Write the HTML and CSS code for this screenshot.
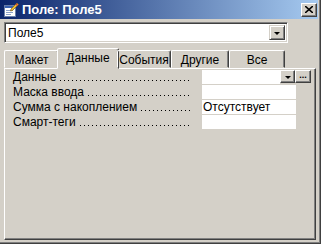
FILE: index.html
```html
<!DOCTYPE html>
<html lang="ru">
<head>
    <meta charset="UTF-8">
    <title>Поле: Поле5</title>
    <link rel="stylesheet" href="styles.css">
</head>
<body>
    <div class="window">
        <div class="titlebar">
            <svg class="app-icon" width="16" height="16" viewBox="0 0 16 16">
                <rect x="1.5" y="3.5" width="11" height="11" fill="#fff" stroke="#6a7fa8"/>
                <rect x="2" y="4" width="10" height="2" fill="#3a62b0"/>
                <line x1="3" y1="8.5" x2="10" y2="8.5" stroke="#8aa0c8"/>
                <line x1="3" y1="10.5" x2="10" y2="10.5" stroke="#8aa0c8"/>
                <line x1="3" y1="12.5" x2="8" y2="12.5" stroke="#8aa0c8"/>
                <path d="M8 7 L14 1 L15.5 2.5 L9.5 8.5 L7.5 9 Z" fill="#f0c030" stroke="#806020" stroke-width="0.7"/>
                <path d="M13 2 L14.5 3.5" stroke="#d04040" stroke-width="1.2"/>
            </svg>
            <span class="title">Поле: Поле5</span>
            <span class="close-btn">
                <svg width="8" height="7" viewBox="0 0 8 7">
                    <path d="M0 0 L8 7 M8 0 L0 7" stroke="#000" stroke-width="1.6"/>
                </svg>
            </span>
        </div>

        <div class="content">
            <div class="combo">
                <span class="combo-text">Поле5</span>
                <span class="drop-btn"><span class="arrow"></span></span>
            </div>

            <div class="tabs">
                <div class="tab tab-maket">Макет</div>
                <div class="tab tab-data active">Данные</div>
                <div class="tab tab-events">События</div>
                <div class="tab tab-other">Другие</div>
                <div class="tab tab-all">Все</div>
            </div>

            <div class="page">
                <div class="prop">
                    <span class="label">Данные</span>
                    <span class="dots"></span>
                    <span class="value value-combo">
                        <span class="value-box"></span>
                        <span class="small-btn"><span class="arrow"></span></span>
                        <span class="small-btn build">...</span>
                    </span>
                </div>
                <div class="prop">
                    <span class="label">Маска ввода</span>
                    <span class="dots"></span>
                    <span class="value"></span>
                </div>
                <div class="prop">
                    <span class="label">Сумма с накоплением</span>
                    <span class="dots"></span>
                    <span class="value">Отсутствует</span>
                </div>
                <div class="prop">
                    <span class="label">Смарт-теги</span>
                    <span class="dots"></span>
                    <span class="value"></span>
                </div>
            </div>
        </div>
    </div>
</body>
</html>
```

FILE: styles.css
```css
body {
    margin: 0;
    font-family: 'Liberation Sans', Arial, sans-serif;
    font-size: 12px;
    color: #000;
    background-color: #d4d0c8;
}

.window {
    width: 321px;
    height: 244px;
    box-sizing: border-box;
    background-color: #d4d0c8;
    border-right: 1px solid #404040;
    border-bottom: 1px solid #404040;
    box-shadow: inset -1px -1px 0 #808080;
    overflow: hidden;
}

/* заголовок окна */
.titlebar {
    height: 19px;
    margin-right: 2px;
    display: flex;
    align-items: center;
    padding-left: 3px;
    background: linear-gradient(to right, #0a246a, #a6caf0);
}

.app-icon {
    flex: none;
}

.title {
    margin-left: 3px;
    color: #fff;
    font-weight: bold;
    font-size: 13px;
    flex: 1;
}

.close-btn {
    width: 16px;
    height: 14px;
    margin-right: 1px;
    box-sizing: border-box;
    background-color: #d4d0c8;
    border: 1px solid;
    border-color: #fff #404040 #404040 #fff;
    box-shadow: inset -1px -1px 0 #808080;
    display: flex;
    align-items: center;
    justify-content: center;
}

.content {
    padding: 3px 4px 0 4px;
}

/* поле со списком */
.combo {
    width: 284px;
    height: 21px;
    box-sizing: border-box;
    background-color: #fff;
    border: 1px solid;
    border-color: #808080 #fff #fff #808080;
    box-shadow: inset 1px 1px 0 #404040, inset -1px -1px 0 #d4d0c8;
    display: flex;
    align-items: center;
    padding: 2px;
}

.combo-text {
    flex: 1;
    padding-left: 1px;
}

.drop-btn {
    width: 16px;
    height: 15px;
    box-sizing: border-box;
    background-color: #d4d0c8;
    border: 1px solid;
    border-color: #d4d0c8 #404040 #404040 #d4d0c8;
    box-shadow: inset 1px 1px 0 #fff, inset -1px -1px 0 #808080;
    display: flex;
    align-items: center;
    justify-content: center;
}

.arrow {
    width: 0;
    height: 0;
    border-left: 3px solid transparent;
    border-right: 3px solid transparent;
    border-top: 3px solid #000;
    margin-top: 1px;
}

/* вкладки */
.tabs {
    margin-top: 5px;
    height: 20px;
    display: flex;
    align-items: flex-end;
    position: relative;
    z-index: 1;
}

.tab {
    height: 18px;
    box-sizing: border-box;
    border: 1px solid;
    border-color: #fff #404040 transparent #fff;
    box-shadow: inset -1px 0 0 #808080;
    border-radius: 2px 2px 0 0;
    display: flex;
    align-items: center;
    justify-content: center;
    padding-top: 2px;
}

.tab-maket { width: 55px; }
.tab-data { width: 61px; }
.tab-events { width: 54px; }
.tab-other { width: 58px; }
.tab-all { width: 56px; }

.tab.active {
    height: 21px;
    margin: 0 -2px -1px -2px;
    background-color: #d4d0c8;
    padding-top: 0;
    padding-bottom: 2px;
}

.tab-data.active {
    width: 62px;
}

/* страница свойств */
.page {
    height: 172px;
    box-sizing: border-box;
    border: 1px solid;
    border-color: #fff #404040 #404040 #fff;
    box-shadow: inset -1px -1px 0 #808080;
    padding-top: 1px;
}

.prop {
    height: 15px;
    display: flex;
    align-items: stretch;
}

.label {
    padding-left: 8px;
    line-height: 14px;
}

.dots {
    flex: 1;
    margin: 0 10px 0 3px;
    background-image: linear-gradient(to right, #000 1px, transparent 1px);
    background-size: 4px 1px;
    background-repeat: repeat-x;
    background-position: 1px 10px;
}

.value {
    width: 94px;
    height: 14px;
    margin-right: 19px;
    background-color: #fff;
    line-height: 14px;
    padding-left: 1px;
    box-sizing: border-box;
}

.value-combo {
    width: 109px;
    margin-right: 4px;
    background-color: transparent;
    padding-left: 0;
    display: flex;
}

.value-box {
    width: 78px;
    background-color: #fff;
}

.small-btn {
    width: 15px;
    height: 13px;
    box-sizing: border-box;
    background-color: #d4d0c8;
    border: 1px solid;
    border-color: #fff #404040 #404040 #fff;
    box-shadow: inset -1px -1px 0 #808080;
    display: flex;
    align-items: center;
    justify-content: center;
}

.build {
    width: 16px;
    font-weight: bold;
    font-size: 9px;
    line-height: 8px;
    align-items: flex-end;
    padding-bottom: 3px;
}
```
